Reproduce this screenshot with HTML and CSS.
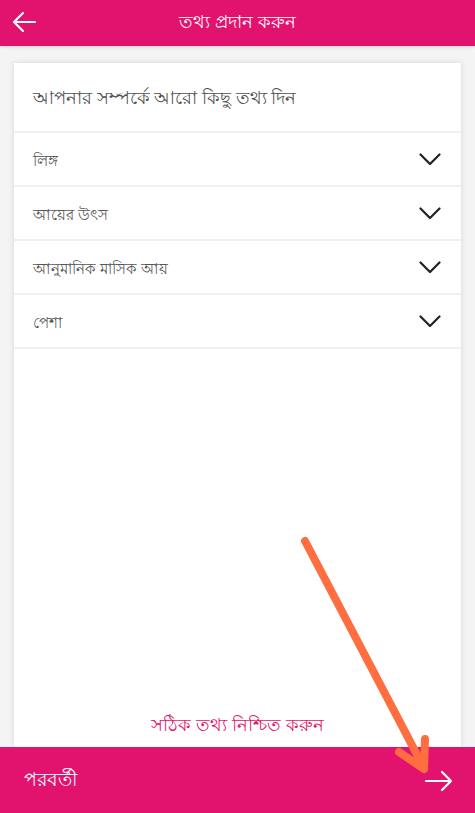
FILE: index.html
```html
<!DOCTYPE html>
<html lang="bn">
<head>
  <meta charset="UTF-8">
  <meta name="viewport" content="width=device-width, initial-scale=1.0">
  <title>তথ্য প্রদান করুন</title>
  <link rel="stylesheet" href="styles.css">
</head>
<body>
  <div class="app">
    <div class="top-bar">
      <span class="back-btn">
        <svg width="26" height="26" viewBox="0 0 26 26"><path d="M24 13H3M12 4l-9 9 9 9" fill="none" stroke="#fff" stroke-width="2.2" stroke-linecap="round" stroke-linejoin="round"/></svg>
      </span>
      <h1>তথ্য প্রদান করুন</h1>
    </div>

    <div class="content">
      <div class="info-card">
        <h2>আপনার সম্পর্কে আরো কিছু তথ্য দিন</h2>
        <div class="select-row"><span>লিঙ্গ</span><svg class="chev" width="22" height="12" viewBox="0 0 22 12"><path d="M1.5 1.5l9.5 9.5 9.5-9.5" fill="none" stroke="#222" stroke-width="2.2" stroke-linecap="round"/></svg></div>
        <div class="select-row"><span>আয়ের উৎস</span><svg class="chev" width="22" height="12" viewBox="0 0 22 12"><path d="M1.5 1.5l9.5 9.5 9.5-9.5" fill="none" stroke="#222" stroke-width="2.2" stroke-linecap="round"/></svg></div>
        <div class="select-row"><span>আনুমানিক মাসিক আয়</span><svg class="chev" width="22" height="12" viewBox="0 0 22 12"><path d="M1.5 1.5l9.5 9.5 9.5-9.5" fill="none" stroke="#222" stroke-width="2.2" stroke-linecap="round"/></svg></div>
        <div class="select-row last"><span>পেশা</span><svg class="chev" width="22" height="12" viewBox="0 0 22 12"><path d="M1.5 1.5l9.5 9.5 9.5-9.5" fill="none" stroke="#222" stroke-width="2.2" stroke-linecap="round"/></svg></div>
        <p class="note">সঠিক তথ্য নিশ্চিত করুন</p>
      </div>
    </div>

    <div class="bottom-bar">
      <span>পরবর্তী</span>
      <svg width="30" height="26" viewBox="0 0 30 26"><path d="M2 13h25M18 4l9 9-9 9" fill="none" stroke="#fff" stroke-width="2.2" stroke-linecap="round" stroke-linejoin="round"/></svg>
    </div>

    <!-- hint arrow drawn over the page -->
    <svg class="hint-arrow" width="475" height="813" viewBox="0 0 475 813">
      <g fill="none" stroke="#ff6e40" stroke-width="8" stroke-linecap="round" stroke-linejoin="round">
        <path d="M305 541L424 768"/>
        <path d="M399 752L424 769L425 739"/>
      </g>
    </svg>
  </div>
</body>
</html>
```

FILE: styles.css
```css
* { box-sizing: border-box; }
body {
  margin: 0;
  font-family: "Noto Sans", "DejaVu Sans", sans-serif;
  background: #f4f4f4;
}
.app {
  position: relative;
  height: 813px;
  display: flex;
  flex-direction: column;
  overflow: hidden;
}
.top-bar {
  height: 46px;
  flex-shrink: 0;
  background: #e2136e;
  display: flex;
  align-items: center;
  justify-content: center;
  position: relative;
  box-shadow: 0 1px 3px rgba(0,0,0,0.15);
  z-index: 2;
}
.top-bar h1 {
  margin: 0;
  color: #fff;
  font-size: 18px;
  font-weight: normal;
}
.back-btn {
  position: absolute;
  left: 11px;
  top: 9px;
  display: flex;
}
.content {
  flex: 1;
  padding: 17px 14px 0;
  display: flex;
  min-height: 0;
}
.info-card {
  flex: 1;
  background: #fff;
  box-shadow: 0 0 6px rgba(0,0,0,0.12);
  display: flex;
  flex-direction: column;
}
.info-card h2 {
  margin: 0;
  height: 68px;
  display: flex;
  align-items: center;
  padding: 5px 0 0 19px;
  font-size: 18px;
  font-weight: normal;
  color: #505050;
}
.select-row {
  height: 54px;
  border-top: 2px solid #f0f0f0;
  display: flex;
  align-items: center;
  justify-content: space-between;
  padding: 0 20px 0 19px;
  font-size: 14.5px;
  color: #555;
}
.select-row span { padding-top: 5px; }
.select-row.last { height: 56px; border-bottom: 2px solid #f0f0f0; }
.note {
  margin: auto 0 5px;
  text-align: center;
  color: #e2136e;
  font-size: 18px;
}
.bottom-bar {
  height: 66px;
  flex-shrink: 0;
  background: #e2136e;
  display: flex;
  align-items: center;
  justify-content: space-between;
  padding: 2px 21px 0 24px;
  color: #fff;
  font-size: 19px;
}
.hint-arrow {
  position: absolute;
  left: 0;
  top: 0;
  pointer-events: none;
}
```
